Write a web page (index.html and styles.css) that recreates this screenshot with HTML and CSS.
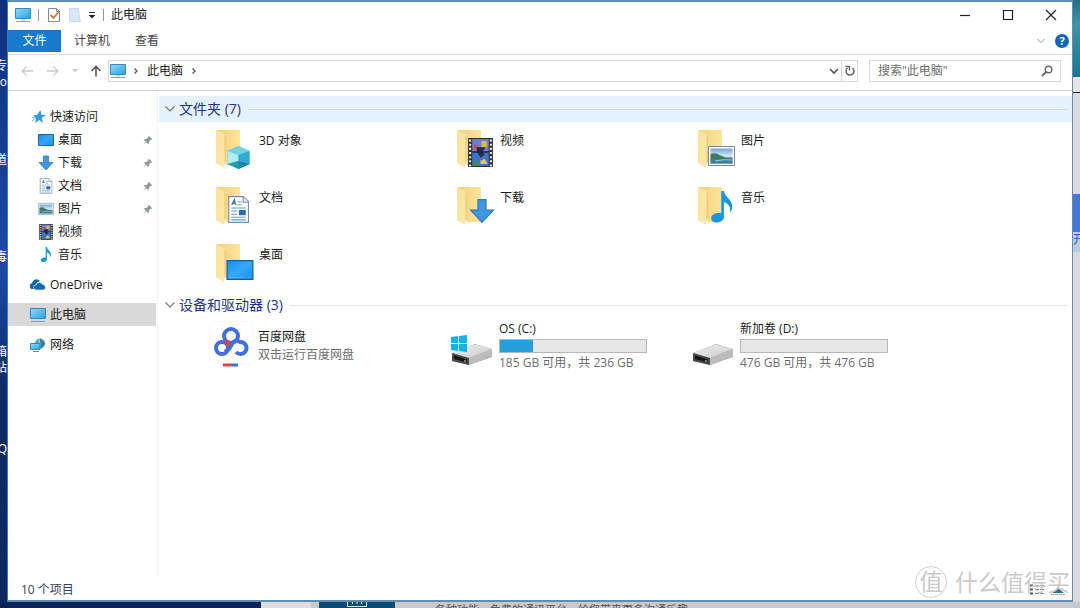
FILE: index.html
```html
<!DOCTYPE html>
<html lang="zh-CN">
<head>
<meta charset="utf-8">
<title>此电脑</title>
<link rel="stylesheet" href="styles.css">
</head>
<body>
<svg class="defs" aria-hidden="true">
  <defs>
    <linearGradient id="g-screen" x1="0" y1="0" x2="1" y2="1"><stop offset="0" stop-color="#8fdcfb"/><stop offset="1" stop-color="#2c9fe0"/></linearGradient>
    <linearGradient id="g-desk" x1="0" y1="0" x2="1" y2="1"><stop offset="0" stop-color="#1c8bea"/><stop offset=".5" stop-color="#35a8fb"/><stop offset="1" stop-color="#1590f2"/></linearGradient>
    <linearGradient id="g-back" x1="0" y1="0" x2="1" y2="0"><stop offset="0" stop-color="#f5d078"/><stop offset="1" stop-color="#fde49c"/></linearGradient>
    <linearGradient id="g-flap" x1="0" y1="0" x2="1" y2="1"><stop offset="0" stop-color="#fbe097"/><stop offset="1" stop-color="#fde9ad"/></linearGradient>
    <linearGradient id="g-drive" x1="0" y1="0" x2="1" y2="1"><stop offset="0" stop-color="#ededed"/><stop offset="1" stop-color="#cdcdcd"/></linearGradient>
    <linearGradient id="g-sky" x1="0" y1="0" x2="0" y2="1"><stop offset="0" stop-color="#6ea6dc"/><stop offset=".5" stop-color="#d4e9f5"/><stop offset="1" stop-color="#4f97b8"/></linearGradient>
    <symbol id="pc" viewBox="0 0 16 16">
      <path d="M.5 1.5h15v10H.5z" fill="url(#g-screen)" stroke="#3b87b5"/>
      <path d="M6 12h4v1.5H6z" fill="#b9d6e6"/><path d="M1 14.5h14" stroke="#6fa5c4"/>
    </symbol>
    <symbol id="folder" viewBox="0 0 40 42">
      <path d="M1 1h23v35H8z" fill="url(#g-back)"/>
      <path d="M0 1l8 4q1 1 1 2v31l-1 1-8-5z" fill="url(#g-flap)"/>
      <path d="M9 7v31" stroke="#e9bf62" stroke-width=".8"/>
      <path d="M8 36l2-3v5l-2 1z" fill="#fff"/>
    </symbol>
    <symbol id="arrow" viewBox="0 0 16 16"><path d="M5.500 1h5v6.500H15L8 15 1 7.500h4.500z" fill="#3f97e0" stroke="#2677bf" stroke-width=".7"/></symbol>
    <symbol id="note" viewBox="0 0 16 22"><path d="M7.500 0h1.800c.6 4.500 6 5.500 5.500 11-.2 1.600-.8 2.800-1.500 3.600.8-3.700-.7-6-4-7.500V17c0 2.400-2.200 4-4.700 4S.8 19.700.8 18c0-2.300 3.300-4 6.700-3.200z" fill="#1a97dc"/></symbol>
    <symbol id="doc" viewBox="0 0 20 26">
      <path d="M.6.6h14l5 5v19.800H.6z" fill="#fff" stroke="#7b8b98" stroke-width="1.100"/>
      <path d="M14.500 1v5h5" fill="#e8eef3" stroke="#7b8b98"/>
      <path d="M3.500 8.500L6 3.500l1.200 5M4.500 7h2.500" fill="none" stroke="#2b7fbe" stroke-width="1.300"/>
      <path d="M9 5.500h4M9 8.500h4M3 11.500h14M3 14.500h6M3 17.500h6M3 20.500h14M3 23h14" stroke="#5e9cc8"/>
      <path d="M10.500 13.500h6.500v5h-6.500z" fill="#2a6d9c"/>
    </symbol>
    <symbol id="picture" viewBox="0 0 27 20">
      <path d="M.5.500h26v19H.5z" fill="#fff" stroke="#7a858d"/>
      <path d="M2.500 2.500h22v15h-22z" fill="url(#g-sky)"/>
      <path d="M2.500 8q5-2 9 1l6 2.500h7v2h-22z" fill="#3d7a62"/><path d="M2.500 13h22v4.500h-22z" fill="#3b7ea3"/><path d="M7 15q8-2 17-1" fill="none" stroke="#9bd2df"/>
    </symbol>
    <symbol id="film" viewBox="0 0 24 28">
      <path d="M0 0h24v28H0z" fill="#2e3134"/>
      <path d="M2 1.500v26M22 1.500v26" stroke="#e9e9e9" stroke-width="2" stroke-dasharray="2 2"/>
      <path d="M4 1h16v12H4z" fill="#6e80cc"/><path d="M4 14h16v13H4z" fill="#3c73cf"/>
      <path d="M13 3h5v6h-5z" fill="#dfbd34"/><path d="M6 5l4 2-2 4H5z" fill="#c94d6b"/><path d="M8 9h9l-3 4 2 3-4 3-3-5z" fill="#292a3c"/><path d="M12 22l4-2 3 5h-7z" fill="#e2c644"/><path d="M5 24l4-3 3 5H5z" fill="#408661"/>
      <path d="M4 13.500h16" stroke="#202226"/>
    </symbol>
    <symbol id="cube" viewBox="0 0 24 24">
      <path d="M12 0l11 5v13l-11 5L1 18V5z" fill="#42bfd4"/>
      <path d="M12 0l11 5-11 4L1 5z" fill="#6ed4e2"/><path d="M1 5l11 4v6L1 18z" fill="#aeeef3"/><path d="M1 18l11-3v8z" fill="#1e9cab"/><path d="M12 9l11-4v13l-11 5z" fill="#31acd0"/><path d="M12 15l11 3-11 5z" fill="#1687a5"/>
    </symbol>
    <symbol id="desk" viewBox="0 0 27 20"><path d="M.6.600h25.800v18.800H.6z" fill="url(#g-desk)" stroke="#145f9c" stroke-width="1.200"/><path d="M3 17.500h16M21 17.500h4" stroke="#78c7f5" stroke-dasharray="1 1"/></symbol>
    <symbol id="drive" viewBox="0 0 42 22">
      <path d="M1 9L24 0l17 5v8L18 21 1 17z" fill="#a9a9a9"/>
      <path d="M1 9L22 1q2-.700 4 0l15 4-23 9z" fill="url(#g-drive)"/>
      <path d="M18 14l23-9v7l-23 9z" fill="#bcbcbc"/>
      <path d="M1 9l17 5v7L1 17z" fill="#4a4a4a"/><path d="M3 11.500l13 4v3L3 15z" fill="#151515"/><path d="M13 16l2 .5v1.500l-2-.5z" fill="#55c86b"/>
    </symbol>
    <symbol id="pin" viewBox="0 0 12 12"><path d="M7 1l4 4-1 .8-.8-.2-2 2.200.1 2-1.200 1L3.800 8.500 1 11l-.3-.4L3.300 8 1.200 5.800l1-1.100 2 .1 2.200-2L6.200 2z" fill="#8d979f"/></symbol>
    <symbol id="chev" viewBox="0 0 12 12"><path d="M1.500 3.500L6 8l4.500-4.500" fill="none" stroke="currentColor" stroke-width="1.200"/></symbol>
    <symbol id="crumb" viewBox="0 0 8 8"><path d="M2.500 1.500L5 4 2.500 6.500" fill="none" stroke="#555" stroke-width="1.300"/></symbol>
    <symbol id="left" viewBox="0 0 14 12"><path d="M13 6H2M6.500 1.500L2 6l4.500 4.500" fill="none" stroke="currentColor" stroke-width="1.300"/></symbol>
  </defs>
</svg>

<div class="desktop">
  <div class="wall-left" aria-hidden="true">
    <span class="tag tag-1">专</span><span class="tag tag-2">o</span><span class="tag tag-3">道</span><span class="tag tag-4">毒</span><span class="tag tag-5">箱</span><span class="tag tag-6">站</span><span class="tag tag-7">Q</span>
  </div>

  <main class="window">
    <header class="titlebar">
      <svg class="i16"><use href="#pc"/></svg>
      <span class="divider"></span>
      <button class="plain" aria-label="属性"><svg class="i16" viewBox="0 0 16 16"><path d="M2.500 1.500h8l3 3v10h-11z" fill="#fff" stroke="#8a8a8a"/><path d="M10.500 1.500v3h3" fill="none" stroke="#8a8a8a"/><path d="M4.500 8l3 3 5-6" fill="none" stroke="#e07634" stroke-width="1.800"/></svg></button>
      <button class="plain" aria-label="新建文件夹"><svg class="i16" viewBox="0 0 16 16"><path d="M2.500 1.500h9l1 10 1 3h-11z" fill="#dbe6f7" stroke="#cbd9ee"/></svg></button>
      <button class="plain" aria-label="自定义快速访问工具栏"><svg class="i8" viewBox="0 0 8 8"><path d="M1 1.500h6" stroke="#333"/><path d="M.5 4h7L4 7.500z" fill="#222"/></svg></button>
      <span class="divider"></span>
      <h1 class="title">此电脑</h1>
      <div class="controls">
        <button class="ctl" aria-label="最小化"><svg class="i12" viewBox="0 0 12 12"><path d="M1 6.500h10" stroke="#222" stroke-width="1.200"/></svg></button>
        <button class="ctl" aria-label="最大化"><svg class="i12" viewBox="0 0 12 12"><path d="M1.500 1.500h9v9h-9z" fill="none" stroke="#222" stroke-width="1.200"/></svg></button>
        <button class="ctl" aria-label="关闭"><svg class="i12" viewBox="0 0 12 12"><path d="M1 1l10 10M11 1L1 11" stroke="#222" stroke-width="1.200"/></svg></button>
      </div>
    </header>

    <nav class="tabs">
      <button class="tab tab-file">文件</button>
      <button class="tab">计算机</button>
      <button class="tab">查看</button>
      <div class="tabs-end">
        <button class="plain pale" aria-label="展开功能区"><svg class="i10"><use href="#chev"/></svg></button>
        <button class="help" aria-label="帮助">?</button>
      </div>
    </nav>

    <div class="navbar">
      <button class="plain nav-off" aria-label="后退"><svg class="i14" viewBox="0 0 14 12"><use href="#left"/></svg></button>
      <button class="plain nav-off flip" aria-label="前进"><svg class="i14" viewBox="0 0 14 12"><use href="#left"/></svg></button>
      <button class="plain nav-off recent" aria-label="最近位置"><svg class="i6" viewBox="0 0 6 6"><path d="M0 1h6L3 4.500z" fill="currentColor"/></svg></button>
      <button class="plain up" aria-label="上移"><svg class="i12" viewBox="0 0 12 12"><path d="M6 11.500V1.500M1.500 6L6 1.500 10.500 6" fill="none" stroke="#555" stroke-width="1.600"/></svg></button>
      <div class="address">
        <svg class="i16"><use href="#pc"/></svg>
        <svg class="i8"><use href="#crumb"/></svg>
        <button class="plain crumb">此电脑</button>
        <svg class="i8"><use href="#crumb"/></svg>
        <button class="plain drop" aria-label="以前的位置"><svg class="i10" viewBox="0 0 10 10"><path d="M1 3l4 4 4-4" fill="none" stroke="#555" stroke-width="1.600"/></svg></button>
        <button class="plain refresh" aria-label="刷新"><svg class="i12" viewBox="0 0 12 12"><path d="M8.500 3a4 4 0 1 1-5 0" fill="none" stroke="#666" stroke-width="1.500"/><path d="M1.500 1.500h4v4" fill="none" stroke="#666" stroke-width="1.400"/></svg></button>
      </div>
      <label class="search">
        <input class="search-input" type="text" aria-label="搜索" placeholder='搜索"此电脑"'>
        <svg class="i12" viewBox="0 0 12 12"><circle cx="7.500" cy="4.500" r="3.300" fill="none" stroke="#666" stroke-width="1.400"/><path d="M5 7l-4 4" stroke="#666" stroke-width="1.800"/></svg>
      </label>
    </div>

    <div class="body">
      <aside class="sidebar">
        <div class="branch">
          <button class="node"><svg class="i14" viewBox="0 0 14 14"><path d="M8.500 0l.8 4.700 4.700.2-4.200 2.800 1.200 5.300-3.700-3L3 13l1.200-4.600L1 5.500l4.200-.7z" fill="#2f9be3"/><path d="M0 11l4-3M0 8l3-1" stroke="#6bbbf0"/></svg>快速访问</button>
          <button class="node sub"><svg class="i16" viewBox="0 0 16 16"><path d="M.500 2.500h15v11H.5z" fill="url(#g-desk)" stroke="#1467a8"/></svg>桌面<svg class="pin"><use href="#pin"/></svg></button>
          <button class="node sub"><svg class="i16"><use href="#arrow"/></svg>下载<svg class="pin"><use href="#pin"/></svg></button>
          <button class="node sub"><svg class="i16"><use href="#doc"/></svg>文档<svg class="pin"><use href="#pin"/></svg></button>
          <button class="node sub"><svg class="i16"><use href="#picture"/></svg>图片<svg class="pin"><use href="#pin"/></svg></button>
          <button class="node sub"><svg class="i16"><use href="#film"/></svg>视频</button>
          <button class="node sub"><svg class="i16"><use href="#note"/></svg>音乐</button>
        </div>
        <button class="node"><svg class="i16" viewBox="0 0 16 16"><path d="M1.500 12A3 3 0 0 1 2 6.200 4.500 4.500 0 0 1 10 4Q7 4.500 6 7.500 3.500 8.500 4 12z" fill="#1467b8"/><path d="M6 13a2.500 2.500 0 0 1 0-5 3.600 3.600 0 0 1 6.700-.5A2.800 2.800 0 0 1 13.500 13z" fill="#1467b8" stroke="#fff" stroke-width=".6"/></svg>OneDrive</button>
        <button class="node on"><svg class="i16"><use href="#pc"/></svg>此电脑</button>
        <button class="node"><svg class="i16" viewBox="0 0 16 16"><circle cx="10" cy="6.500" r="5" fill="#5e9fc0"/><path d="M8 2q3 1 2 4l5-1-4 6z" fill="#a3d4df"/><path d="M10 1.500l5.500 5-4.500 5.500z" fill="#3b7d9e"/><path d="M.500 6.500h9.500v6H.5z" fill="url(#g-screen)" stroke="#3486b4"/><path d="M3 14.500h6" stroke="#4a93bd"/></svg>网络</button>
      </aside>

      <section class="content">
        <h2 class="group group-hot"><svg class="i12"><use href="#chev"/></svg>文件夹 (7)</h2>
        <div class="tiles">
          <button class="tile"><svg class="big" viewBox="0 0 40 42"><use href="#folder" width="40" height="42"/><use href="#cube" x="10" y="17" width="25" height="24"/></svg><span class="name">3D 对象</span></button>
          <button class="tile"><svg class="big" viewBox="0 0 40 42"><use href="#folder" width="40" height="42"/><use href="#film" x="11" y="9" width="25" height="29"/></svg><span class="name">视频</span></button>
          <button class="tile"><svg class="big" viewBox="0 0 40 42"><use href="#folder" width="40" height="42"/><use href="#picture" x="10" y="17" width="27" height="20"/></svg><span class="name">图片</span></button>
          <button class="tile"><svg class="big" viewBox="0 0 40 42"><use href="#folder" width="40" height="42"/><use href="#doc" x="12" y="10" width="21" height="27"/></svg><span class="name">文档</span></button>
          <button class="tile"><svg class="big" viewBox="0 0 40 42"><use href="#folder" width="40" height="42"/><use href="#arrow" x="12" y="12" width="26" height="26"/></svg><span class="name">下载</span></button>
          <button class="tile"><svg class="big" viewBox="0 0 40 42"><use href="#folder" width="40" height="42"/><use href="#note" x="12" y="5" width="24" height="33"/></svg><span class="name">音乐</span></button>
          <button class="tile"><svg class="big" viewBox="0 0 40 42"><use href="#folder" width="40" height="42"/><use href="#desk" x="10" y="17" width="28" height="20"/></svg><span class="name">桌面</span></button>
        </div>

        <h2 class="group"><svg class="i12"><use href="#chev"/></svg>设备和驱动器 (3)</h2>
        <div class="tiles devices">
          <button class="tile device">
            <svg class="disk" viewBox="0 0 46 46"><rect x=".5" y=".500" width="43" height="43" rx="5" fill="#fff" stroke="#f8f8f8"/><g fill="none" stroke-width="4"><circle cx="22" cy="15" r="7" stroke="#3f6fe0"/><circle cx="13" cy="27" r="6" stroke="#3f6fe0"/><path d="M16 31q5-3 7-8t8-2a6 6 0 1 1-4 10" stroke="#3f6fe0"/><path d="M16 20q3 1 4 5" stroke="#e0453d"/></g><path d="M14 44h8" stroke="#e0453d" stroke-width="3"/><path d="M22 44h7" stroke="#3f6fe0" stroke-width="3"/></svg>
            <span class="info"><span>百度网盘</span><span class="note">双击运行百度网盘</span></span>
          </button>
          <button class="tile device">
            <svg class="disk" viewBox="0 0 46 46"><use href="#drive" x="1" y="23" width="42" height="22"/><path d="M1 16l7-1v7H1zM9 15l8-1v8H9zM1 23h7v7l-7-1zM9 23h8v8l-8-1z" fill="#12b3e6"/></svg>
            <span class="info"><span>OS (C:)</span><progress class="meter" value="54" max="236" aria-label="OS (C:) 已用空间"></progress><span class="note">185 GB 可用，共 236 GB</span></span>
          </button>
          <button class="tile device">
            <svg class="disk" viewBox="0 0 46 46"><use href="#drive" x="1" y="23" width="42" height="22"/></svg>
            <span class="info"><span>新加卷 (D:)</span><progress class="meter" value="0" max="476" aria-label="新加卷 (D:) 已用空间"></progress><span class="note">476 GB 可用，共 476 GB</span></span>
          </button>
        </div>
      </section>
    </div>

    <footer class="status">
      <span>10 个项目</span>
      <span class="views">
        <button class="plain" aria-label="详细信息"><svg class="i16" viewBox="0 0 16 16"><path d="M1 3.500h3M1 7.500h3M1 11.500h3" stroke="#555" stroke-width="2"/><path d="M6 3.500h4M11 3.500h4M6 7.500h4M11 7.500h4M6 11.500h4M11 11.500h4" stroke="#777"/></svg></button>
        <button class="plain" aria-label="大图标"><svg class="i16" viewBox="0 0 16 16"><path d="M1 3.500h14M1 12.500h14" stroke="#99a" stroke-dasharray="3 1"/><path d="M2 11l6-5 6 5z" fill="#29708c"/></svg></button>
      </span>
    </footer>
    <div class="watermark" aria-hidden="true"><span class="seal">值</span><span>什么值得买</span></div>
  </main>

  <div class="wall-right" aria-hidden="true"><span class="sea"></span><span class="bar"></span><span class="blue"></span><span class="cut">开</span></div>

  <div class="wall-bottom" aria-hidden="true">
    <span class="navy"></span><span class="panel"></span><span class="teal"><svg class="grid-icon" viewBox="0 0 20 5"><path d="M.500 0v4.500h19V0M5.500 0v2M10 0v2M14.500 0v2" fill="none" stroke="#dbe8f0"/></svg></span><span class="blurb">各种功能、免费的通讯平台、给您带来更多沟通乐趣</span>
  </div>
</div>
</body>
</html>
```

FILE: styles.css
```css
* { box-sizing: border-box; }

body {
  margin: 0;
  font: 12px/16px "Open Sans", "Noto Sans CJK SC", sans-serif;
  color: #1a1a1a;
}

button, input { font: inherit; color: inherit; }
button { margin: 0; padding: 0; border: 0; background: none; text-align: left; }
svg { display: block; flex: none; }
h1, h2 { margin: 0; font-weight: 400; }

.defs { position: absolute; width: 0; height: 0; }
.i6 { width: 6px; height: 6px; }
.i8 { width: 8px; height: 8px; }
.i10 { width: 10px; height: 10px; }
.i12 { width: 12px; height: 12px; }
.i14 { width: 14px; height: 14px; }
.i16 { width: 16px; height: 16px; }

.desktop {
  display: grid;
  grid-template: minmax(0, 1fr) 6px / 7px minmax(0, 1fr) 7px;
  height: 100vh;
  overflow: hidden;
}

/* Window frame */
.window {
  position: relative;
  display: flex;
  flex-direction: column;
  min-height: 0;
  background: #fff;
  border: 1px solid #5c8fb3;
  border-top-width: 2px;
  border-bottom-width: 2px;
  border-left-color: #3c78bd;
}

.plain { display: flex; align-items: center; }

.titlebar { display: flex; align-items: center; gap: 5px; height: 28px; padding: 0 0 3px 7px; }
.title { font-size: 12px; }
.divider { width: 1px; height: 12px; margin: 0 2px; background: #999; }
.controls { display: flex; margin-left: auto; }
.ctl { display: flex; align-items: center; justify-content: center; width: 43px; height: 25px; }

.tabs { display: flex; align-items: stretch; height: 25px; padding-bottom: 2px; border-bottom: 1px solid #dadbdc; }
.tab { padding: 0 12px; margin-right: 1px; color: #444; }
.tab-file { width: 53px; padding: 0; text-align: center; color: #fff; background: #1979ca; }
.tabs-end { display: flex; align-items: center; gap: 9px; margin-left: auto; padding-right: 3px; }
.pale { color: #999; }
.help { width: 14px; height: 14px; border-radius: 50%; background: #0f66bd; color: #fff; font-size: 11px; font-weight: 700; line-height: 14px; text-align: center; }

.navbar { display: flex; align-items: center; height: 36px; padding: 0 11px 4px 12px; border-bottom: 1px solid #ccc; }
.nav-off { margin-right: 12px; color: #ccc; }
.flip { transform: scaleX(-1); }
.up { margin-right: 6px; }
.address { display: flex; align-items: center; flex: 1; gap: 6px; height: 22px; padding-left: 1px; border: 1px solid #d9d9d9; }
.crumb { margin: 0 1px; }
.drop { margin-left: auto; }
.refresh { justify-content: center; width: 16px; height: 20px; margin-left: -4px; border-left: 1px solid #d9d9d9; }
.search { display: flex; align-items: center; width: 192px; height: 22px; margin-left: 11px; padding: 0 7px 0 8px; border: 1px solid #d9d9d9; }
.search-input { flex: 1; min-width: 0; padding: 0; border: 0; outline: 0; background: none; }
.search-input::placeholder { color: #6d6d6d; opacity: 1; }

/* Body */
.body { display: flex; flex: 1; min-height: 0; }

.sidebar { width: 150px; display: flex; flex-direction: column; gap: 7px; padding-top: 14px; border-right: 1px solid #f5f5f5; }
.branch { display: flex; flex-direction: column; }
.node { display: flex; align-items: center; gap: 4px; width: 148px; height: 23px; padding-left: 22px; }
.branch .node:first-child { padding-left: 24px; }
.branch .sub { padding-left: 30px; }
.on { background: #d9d9d9; }
.pin { width: 10px; height: 12px; margin: 0 3px 0 auto; }

.content { flex: 1; min-width: 0; padding: 5px 0 0 1px; }
.group { display: flex; align-items: center; gap: 3px; height: 24px; padding: 0 4px 0 5px; font-size: 14px; line-height: 20px; color: #1e3287; }
.group svg { color: #777; }
.group::after { content: ""; flex: 1; height: 1px; margin-left: 4px; background: #e6e6e6; }
.group-hot { height: 26px; background: #e5f2fb; }
.group-hot::after { background: #c6dfef; }

.tiles { display: grid; grid-template-columns: repeat(auto-fill, 241px); padding-left: 52px; }
.tile { display: flex; align-items: flex-start; gap: 3px; height: 57px; padding: 7px 0 0 5px; }
.big { width: 40px; height: 42px; }
.name { padding-top: 4px; }
.devices { padding-left: 50px; }
.device { padding: 4px 0 0 0; }
.disk { width: 46px; height: 46px; }
.info { display: flex; flex-direction: column; gap: 2px; }
.device:first-child .info { padding-top: 8px; }
.note { color: #6d6d6d; }
.meter { appearance: none; display: block; width: 148px; height: 14px; border: 1px solid #b7b7b7; background: #e6e6e6; }
.meter::-webkit-progress-bar { background: #e6e6e6; }
.meter::-webkit-progress-value { background: #26a0da; }

.status { display: flex; align-items: center; justify-content: space-between; height: 24px; padding: 4px 6px 0 13px; color: #33415c; }
.views { display: flex; gap: 5px; }

.watermark { position: absolute; right: 2px; bottom: 2px; display: flex; align-items: center; gap: 8px; font-size: 23px; line-height: 32px; color: #cacaca; pointer-events: none; }
.seal { width: 32px; height: 32px; border: 1px solid #d0d0d0; border-radius: 50%; line-height: 28px; text-align: center; }

/* Desktop and other windows showing round the frame */
.wall-left { position: relative; overflow: hidden; color: #fff; background: linear-gradient(#0f2f7a, #173f93 25%, #1c49a4 45%, #0f2c66 65%, #0c285e); }
.tag { position: absolute; right: 0; }
.tag-1 { top: 58px; }
.tag-2 { top: 74px; }
.tag-3 { top: 152px; }
.tag-4 { top: 249px; }
.tag-5 { top: 344px; }
.tag-6 { top: 360px; }
.tag-7 { top: 441px; }

.wall-right { display: flex; flex-direction: column; overflow: hidden; background: #dad9dc; }
.sea { height: 77px; background: linear-gradient(#1f6f86, #3c95a8 30%, #1b7590); }
.bar { height: 16px; background: #e6e6e4; border-bottom: 1px solid #222; }
.blue { height: 38px; margin-top: 101px; background: #4377dc; }
.cut { height: 20px; color: #1f5fa8; background: #b9cce4; }

.wall-bottom { grid-column: 1 / -1; display: flex; overflow: hidden; background: #cbc8ca; }
.navy { flex: 0 0 261px; background: #0c2455; }
.panel { flex: 0 0 58px; background: #deddde; border-right: 8px solid #c9c9c9; }
.teal { flex: 0 0 76px; background: #0f4a75; }
.grid-icon { width: 20px; height: 5px; margin-left: 28px; }
.blurb { margin-left: 40px; color: #555; font-size: 11px; line-height: 16px; }
```
